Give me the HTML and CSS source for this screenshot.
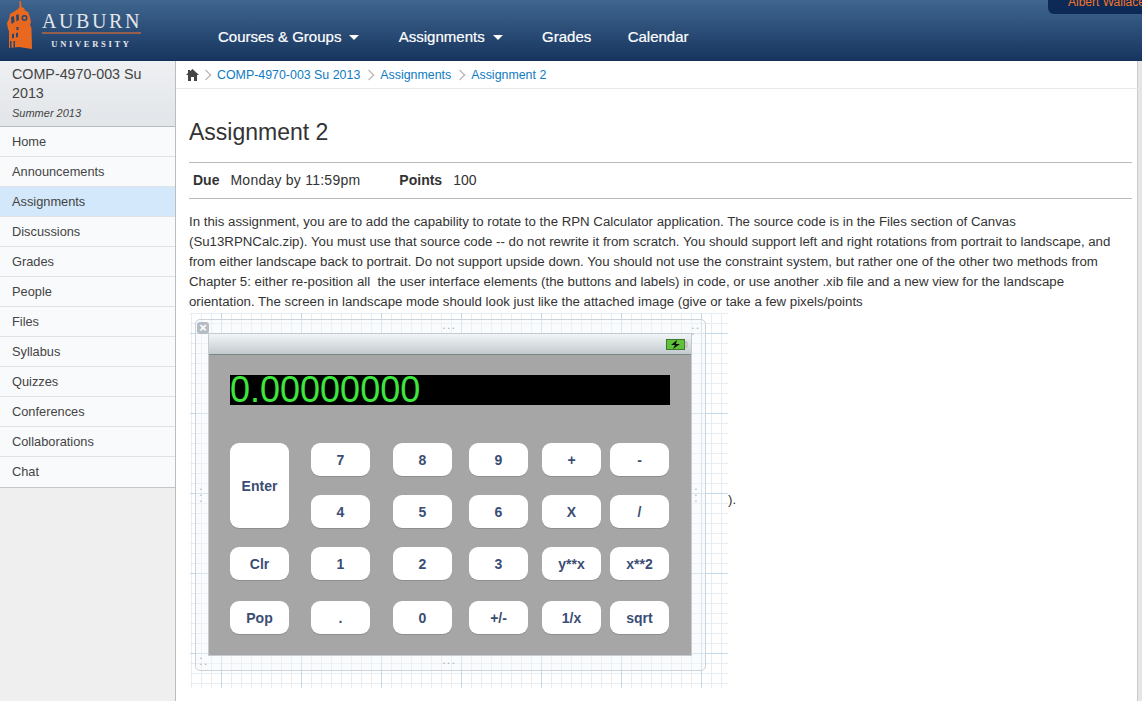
FILE: index.html
```html
<!DOCTYPE html>
<html lang="en">

<head>
    <meta charset="UTF-8">
    <title>Assignment 2</title>
    <link rel="stylesheet" href="styles.css">
</head>

<body>
    <div class="header">
        <div class="logo">
            <svg class="tower" width="28" height="51" viewBox="0 0 28 51">
                <path fill="#e8681f" d="M13.500 0L15 0L15.500 6L18 7L19 9.500L22 11L24 16L25 21L24 24L25.500 27L26 48L13 46L3 47L3 30L2 28L1 22L3 18L4 13L9 10L12 8L13.500 6Z" />
                <path fill="#27476f" d="M5 16l3-1 .5 6-3 2zM10 14l2.500-1 .5 6-2.500 1.500zM6 33l2-.5v4.500l-2 .5zM10 32l2-.5v4.500l-2 .5zM4 40h1.500v7H4zM7.500 40H9v7H7.500zM10.500 26h2v3h-2z" />
                <circle cx="18.500" cy="17" r="3" fill="#27476f" />
                <circle cx="18.500" cy="17" r="1.500" fill="#e8681f" />
            </svg>
            <div class="wordmark">
                <div class="auburn">AUBURN</div>
                <div class="university">UNIVERSITY</div>
            </div>
        </div>
        <ul class="nav">
            <li>Courses &amp; Groups<i class="caret"></i></li>
            <li>Assignments<i class="caret"></i></li>
            <li>Grades</li>
            <li>Calendar</li>
        </ul>
        <div class="user">Albert Wallace</div>
    </div>

    <div class="main">
        <div class="side">
            <div class="course">
                <div class="course-name">COMP-4970-003 Su 2013</div>
                <div class="term">Summer 2013</div>
            </div>
            <ul class="menu">
                <li>Home</li>
                <li>Announcements</li>
                <li class="active">Assignments</li>
                <li>Discussions</li>
                <li>Grades</li>
                <li>People</li>
                <li>Files</li>
                <li>Syllabus</li>
                <li>Quizzes</li>
                <li>Conferences</li>
                <li>Collaborations</li>
                <li>Chat</li>
            </ul>
        </div>

        <div class="content">
            <div class="crumbs">
                <svg class="home" width="13" height="12" viewBox="0 0 13 12">
                    <path fill="#444" d="M6.500 0L13 6h-2v6H8V8H5v4H2V6H0l2-1.900V1h2v1.300z" />
                </svg>
                <i class="sep"></i><a>COMP-4970-003 Su 2013</a>
                <i class="sep"></i><a>Assignments</a>
                <i class="sep"></i><a>Assignment 2</a>
            </div>
            <div class="page">
                <h1>Assignment 2</h1>
                <div class="details">
                    <b>Due</b><span class="due">Monday by 11:59pm</span>
                    <b>Points</b><span>100</span>
                </div>
                <p class="text">In this assignment, you are to add the capability to rotate to the RPN Calculator application. The source code is in the Files section of Canvas (Su13RPNCalc.zip). You must use that source code -- do not rewrite it from scratch. You should support left and right rotations from portrait to landscape, and from either landscape back to portrait. Do not support upside down. You should not use the constraint system, but rather one of the other two methods from Chapter 5: either re-position all&nbsp; the user interface elements (the buttons and labels) in code, or use another .xib file and a new view for the landscape orientation. The screen in landscape mode should look just like the attached image (give or take a few pixels/points<br><span class="canvas">
                    <span class="frame"></span>
                    <span class="close">&times;</span>
                    <span class="dots dots-top">&bull;&bull;&bull;</span>
                    <span class="dots dots-bottom">&bull;&bull;&bull;</span>
                    <span class="dots dots-left">&bull;<br>&bull;<br>&bull;</span>
                    <span class="dots dots-right">&bull;<br>&bull;<br>&bull;</span>
                    <span class="dots dots-tr">&bull;&bull;<br>&bull;</span>
                    <span class="dots dots-bl">&bull;<br>&bull;&bull;</span>
                    <span class="view">
                        <span class="status">
                            <svg class="battery" width="22" height="11" viewBox="0 0 22 11">
                                <rect x="0.500" y="0.500" width="18" height="10" fill="#5fc23a" stroke="#3c7a28" />
                                <rect x="19" y="3" width="2" height="5" fill="#ddd" stroke="#888" stroke-width="0.500" />
                                <path fill="#111" d="M11 1L5 6h4L7 10l7-5h-4z" />
                            </svg>
                        </span>
                        <span class="display">0.00000000</span>
                        <span class="keys">
                            <span class="key c1 r1 tall">Enter</span>
                            <span class="key c2 r1">7</span>
                            <span class="key c3 r1">8</span>
                            <span class="key c4 r1">9</span>
                            <span class="key c5 r1">+</span>
                            <span class="key c6 r1">-</span>
                            <span class="key c2 r2">4</span>
                            <span class="key c3 r2">5</span>
                            <span class="key c4 r2">6</span>
                            <span class="key c5 r2">X</span>
                            <span class="key c6 r2">/</span>
                            <span class="key c1 r3">Clr</span>
                            <span class="key c2 r3">1</span>
                            <span class="key c3 r3">2</span>
                            <span class="key c4 r3">3</span>
                            <span class="key c5 r3">y**x</span>
                            <span class="key c6 r3">x**2</span>
                            <span class="key c1 r4">Pop</span>
                            <span class="key c2 r4">.</span>
                            <span class="key c3 r4">0</span>
                            <span class="key c4 r4">+/-</span>
                            <span class="key c5 r4">1/x</span>
                            <span class="key c6 r4">sqrt</span>
                        </span>
                    </span>
                </span>).</p>
            </div>
        </div>
    </div>
</body>

</html>
```

FILE: styles.css
```css
* {
    padding: 0;
    margin: 0;
    list-style: none;
    box-sizing: border-box;
}

html,
body {
    height: 701px;
    overflow: hidden;
}

body {
    font-family: "Liberation Sans", Arial, sans-serif;
    font-size: 13px;
    color: #333;
    background: #fff;
}

/* top bar */

.header {
    height: 61px;
    display: flex;
    position: relative;
    background: linear-gradient(#3f668f, #17355f);
    border-bottom: 1px solid #12305a;
}

.logo {
    width: 218px;
    display: flex;
    padding: 1px 0 0 6px;
}

.tower {
    flex: none;
}

.wordmark {
    margin: 9px 0 0 8px;
    width: 99px;
    color: #e4e6ea;
    font-family: "Liberation Serif", serif;
    text-align: center;
}

.auburn {
    font-size: 20px;
    line-height: 22px;
    letter-spacing: 2.600px;
    height: 24px;
    border-bottom: 2px solid #96604f;
    white-space: nowrap;
}

.university {
    font-size: 8.500px;
    line-height: 10px;
    letter-spacing: 2.700px;
    margin-top: 5px;
    font-weight: bold;
    white-space: nowrap;
}

.nav {
    display: flex;
    gap: 36.400px;
    padding-top: 28px;
    font-size: 15px;
    line-height: 18px;
    color: #fff;
    -webkit-text-stroke: 0.200px #fff;
}

.caret {
    display: inline-block;
    margin: 0 3px 2px 8px;
    border-top: 5px solid #fff;
    border-left: 5px solid transparent;
    border-right: 5px solid transparent;
}

.user {
    position: absolute;
    right: 0;
    top: 0;
    width: 94px;
    height: 14px;
    padding-left: 20px;
    background: #0d2a56;
    border-radius: 0 0 0 6px;
    color: #f0752a;
    font-size: 12px;
    line-height: 5px;
    white-space: nowrap;
    overflow: hidden;
}

/* left column */

.main {
    display: flex;
    height: 640px;
}

.side {
    width: 176px;
    flex: none;
    background: #efefef;
    border-right: 1px solid #b9bcc0;
}

.course {
    height: 65px;
    padding: 4px 12px 0;
    background: linear-gradient(#eef0f2, #e2e5e9);
    font-size: 14.300px;
    line-height: 19px;
    color: #444;
}

.term {
    margin-top: 3px;
    font-size: 11px;
    line-height: 15px;
    font-style: italic;
}

.menu {
    border-top: 1px solid #b8babd;
    border-bottom: 1px solid #c4c6c9;
    font-size: 12.800px;
}

.menu li {
    height: 30px;
    line-height: 29px;
    padding-left: 12px;
    background: #f9fafc;
    border-bottom: 1px solid #dfe2e6;
    color: #444;
}

.menu li:last-child {
    border-bottom: 0;
}

.menu li.active {
    background: #d3e8fa;
}

/* content */

.content {
    flex: 1;
    min-width: 0;
    border-right: 4px solid #e6e6e6;
    box-shadow: inset -1px 0 0 #c9c9d0;
}

.crumbs {
    height: 28px;
    display: flex;
    align-items: center;
    padding-left: 10px;
    font-size: 12.400px;
    color: #0e7bc4;
    border-bottom: 1px solid #eaeaea;
}

.sep {
    width: 6px;
    height: 6px;
    margin: 0 8px 0 6px;
    border-top: 1px solid #bbb;
    border-right: 1px solid #bbb;
    transform: rotate(45deg) scale(1.300);
}

.home + .sep {
    margin-left: 4px;
}

.page {
    padding: 0 6px 0 13px;
}

h1 {
    font-size: 23px;
    font-weight: normal;
    line-height: 28px;
    margin-top: 29px;
    padding-bottom: 16px;
    border-bottom: 1px solid #bbb;
}

.details {
    height: 36px;
    display: flex;
    align-items: center;
    padding: 0 0 2px 4px;
    font-size: 14px;
    border-bottom: 1px solid #bbb;
}

.details b {
    margin-right: 11px;
}

.due {
    margin-right: 39px;
    letter-spacing: 0.240px;
}

.text {
    margin-top: 13px;
    width: 935px;
    font-size: 13.250px;
    line-height: 20px;
}

/* interface builder picture */

.canvas {
    display: inline-block;
    position: relative;
    vertical-align: middle;
    width: 538px;
    height: 375px;
    margin: 1px 0 0 1px;
    background-color: #fff;
    background-image:
        linear-gradient(#c3d8ea 1px, transparent 1px),
        linear-gradient(90deg, #c3d8ea 1px, transparent 1px),
        linear-gradient(#e6edf3 1px, transparent 1px),
        linear-gradient(90deg, #e6edf3 1px, transparent 1px);
    background-size: 80px 80px, 80px 80px, 10px 10px, 10px 10px;
    background-position: 31px 20px;
}

.frame {
    position: absolute;
    left: 5px;
    top: 6px;
    width: 511px;
    height: 352px;
    background: rgba(245, 247, 250, 0.45);
    border: 1px solid #ccd2d9;
    border-radius: 5px;
}

.close {
    position: absolute;
    left: 7px;
    top: 9px;
    width: 12px;
    height: 12px;
    background: #b6bcc4;
    border-radius: 3px;
    color: #fff;
    font-size: 13px;
    font-weight: bold;
    line-height: 11px;
    text-align: center;
}

.dots {
    position: absolute;
    color: #aab0b7;
    font-size: 5px;
    line-height: 6px;
    letter-spacing: 3px;
}

.dots-top {
    left: 253px;
    top: 12px;
}

.dots-bottom {
    left: 253px;
    top: 347px;
}

.dots-left {
    left: 10px;
    top: 173px;
}

.dots-right {
    left: 505px;
    top: 173px;
}

.dots-tr {
    left: 502px;
    top: 12px;
}

.dots-bl {
    left: 10px;
    top: 342px;
}

.view {
    position: absolute;
    left: 19px;
    top: 21px;
    width: 482px;
    height: 321px;
    background: #a6a6a6;
    box-shadow: 0 0 0 1px #c5cbd1;
}

.status {
    display: flex;
    justify-content: flex-end;
    align-items: center;
    height: 21px;
    padding-right: 3px;
    background: linear-gradient(#f1f5f8, #c3cacd);
    border-bottom: 1px solid #7e8784;
}

.display {
    display: block;
    margin: 20px 0 0 21px;
    width: 440px;
    height: 30px;
    background: #000;
    color: #3ee63e;
    font-size: 36px;
    line-height: 30px;
}

.keys {
    display: grid;
    grid-template-columns: 59px 22px 59px 23px 59px 17px 59px 14px 59px 9px 59px;
    grid-template-rows: 33px 19px 33px 19px 33px 21px 33px;
    margin: 38px 0 0 21px;
}

.key {
    display: flex;
    align-items: center;
    justify-content: center;
    background: #fff;
    border-radius: 9px;
    box-shadow: 0 1px 0 #8e8e8e;
    color: #3a4d74;
    font-size: 14px;
    font-weight: bold;
}

.c1 { grid-column: 1; }
.c2 { grid-column: 3; }
.c3 { grid-column: 5; }
.c4 { grid-column: 7; }
.c5 { grid-column: 9; }
.c6 { grid-column: 11; }

.r1 { grid-row: 1; }
.r2 { grid-row: 3; }
.r3 { grid-row: 5; }
.r4 { grid-row: 7; }

.key.tall {
    grid-row: 1 / 4;
}
```
